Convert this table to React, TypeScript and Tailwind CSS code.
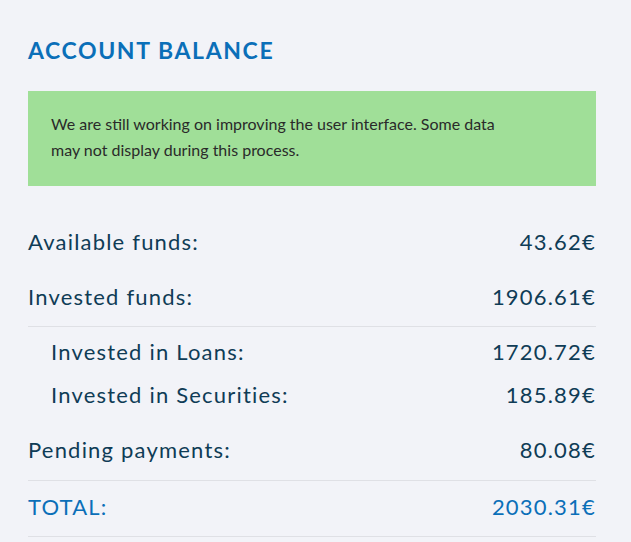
const rows = [
  { label: 'Available funds:', value: '43.62€' },
  { label: 'Invested funds:', value: '1906.61€' },
]

const subRows = [
  { label: 'Invested in Loans:', value: '1720.72€' },
  { label: 'Invested in Securities:', value: '185.89€' },
]

export default function App() {
  return (
    <div className="min-h-screen bg-[#f2f3f8] pl-[28px] pr-[35px] pt-[36px] font-['Lato',sans-serif] text-[#0f3c56]">
      <h1 className="text-[23px] font-bold uppercase tracking-[1.6px] leading-[28px] text-[#0b6fb8]">
        Account Balance
      </h1>

      <div className="mt-[27px] h-[95px] bg-[#a0df98] pl-[23px] pr-[70px] pt-[20px] text-[16px] leading-[26px] text-[#2a2a2a]">
        We are still working on improving the user interface. Some data may not display during this process.
      </div>

      <div className="mt-[30px] text-[22px] tracking-[1.2px]">
        <div className="border-b border-[#dfe0e5]">
          {rows.map(row => (
            <div key={row.label} className="flex h-[55px] items-center justify-between pb-[5px]">
              <span>{row.label}</span>
              <span>{row.value}</span>
            </div>
          ))}
        </div>

        <div className="pt-[5px] pb-[6px]">
          {subRows.map(row => (
            <div key={row.label} className="flex h-[43px] items-center justify-between pb-[5px] pl-[23px]">
              <span>{row.label}</span>
              <span>{row.value}</span>
            </div>
          ))}
        </div>

        <div className="flex h-[57px] items-center justify-between border-b border-[#dfe0e5] pb-[5px]">
          <span>Pending payments:</span>
          <span>80.08€</span>
        </div>

        <div className="flex h-[56px] items-center justify-between border-b border-[#dfe0e5] pb-[4px] text-[#0b6fb8]">
          <span>TOTAL:</span>
          <span>2030.31€</span>
        </div>
      </div>
    </div>
  )
}
